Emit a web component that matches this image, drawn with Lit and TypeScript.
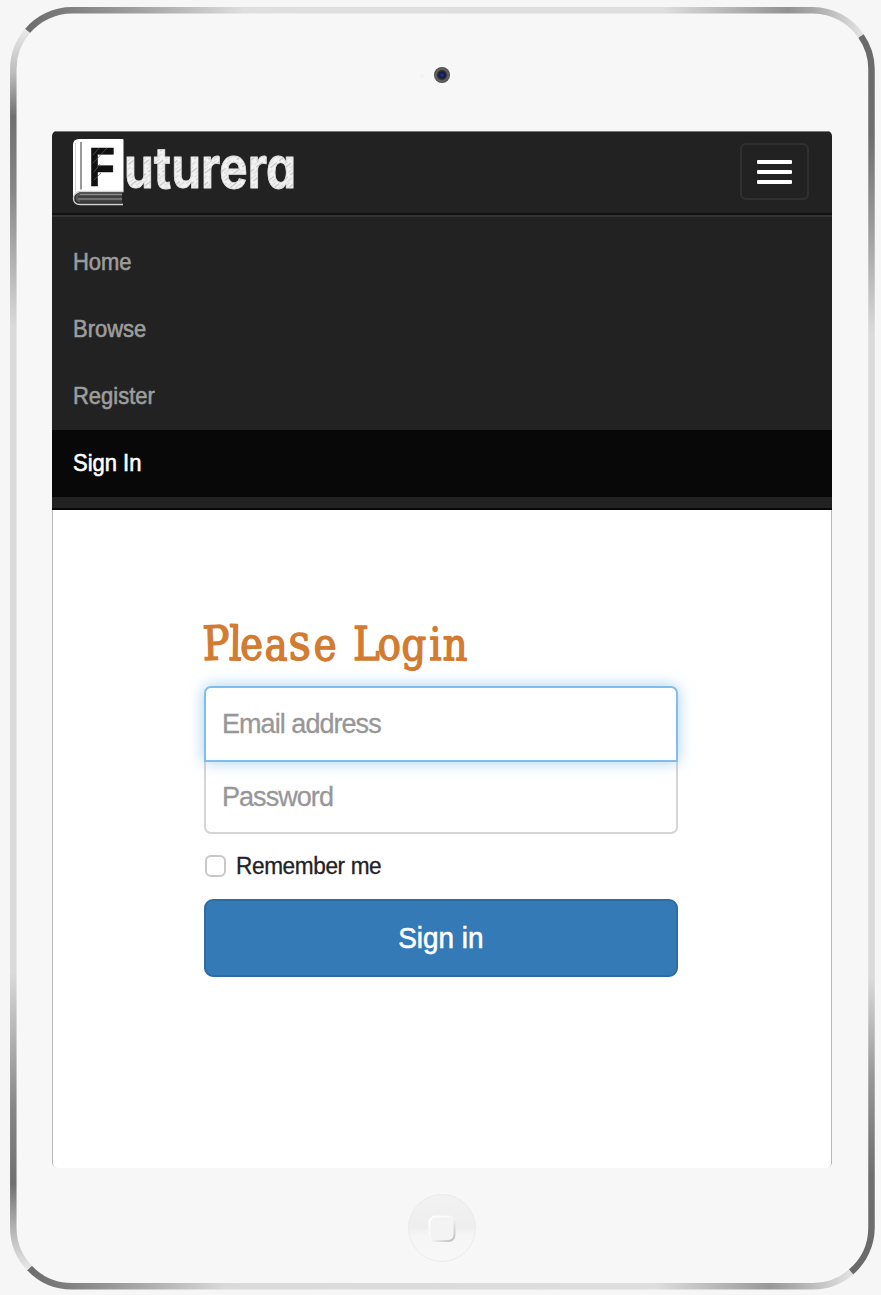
import { LitElement, html, svg, css } from "lit";
import { customElement, state } from "lit/decorators.js";

@customElement("tablet-frame")
class TabletFrame extends LitElement {
  static styles = css`
    :host { display: grid; width: 881px; height: 1295px; background: #f6f6f6; }
    .bezel, .body { grid-area: 1 / 1; }
    .bezel { display: block; }
    .body {
      display: grid;
      grid-template-rows: 131px 1037px 1fr;
      justify-items: center;
      padding-left: 2px;
      box-sizing: border-box;
    }
    .camera { align-self: start; margin: 66px 13px 0 0; display: block; }
    .home { margin: 25px 0 0 0; display: block; }
    .screen { width: 780px; margin-left: 1px; overflow: hidden; border-radius: 5px; }
  `;

  render() {
    const stop = (o: number, c: string) => svg`<stop offset=${o / 100} stop-color=${c}></stop>`;
    return html`
      <svg class="bezel" width="881" height="1295" viewBox="0 0 881 1295">
        <defs>
          <linearGradient id="top" gradientUnits="userSpaceOnUse" x1="28" x2="863" y1="0" y2="0">
            ${stop(0, "#6e6e6e")}${stop(4, "#7b7b7b")}${stop(13, "#a0a0a0")}${stop(26, "#dfdfdf")}${stop(76, "#dedede")}${stop(91, "#929292")}${stop(94, "#a8a8a8")}${stop(100, "#e4e4e4")}
          </linearGradient>
          <linearGradient id="bottom" gradientUnits="userSpaceOnUse" x1="28" x2="853" y1="0" y2="0">
            ${stop(0, "#6c6c6c")}${stop(5, "#808080")}${stop(24, "#dadada")}${stop(76, "#dedede")}${stop(90, "#989898")}${stop(95, "#bcbcbc")}${stop(100, "#e4e4e4")}
          </linearGradient>
          <linearGradient id="left" gradientUnits="userSpaceOnUse" x1="0" x2="0" y1="30" y2="1270">
            ${stop(0, "#e8e8e8")}${stop(3.5, "#bcbcbc")}${stop(7, "#707070")}${stop(13, "#868686")}${stop(24, "#dadada")}${stop(76, "#dadada")}${stop(87, "#868686")}${stop(93, "#707070")}${stop(96.5, "#b0b0b0")}${stop(100, "#e8e8e8")}
          </linearGradient>
          <linearGradient id="right" gradientUnits="userSpaceOnUse" x1="0" x2="0" y1="35" y2="1275">
            ${stop(0, "#6a6a6a")}${stop(8, "#6e6e6e")}${stop(15, "#989898")}${stop(24, "#dadada")}${stop(76, "#dadada")}${stop(84, "#989898")}${stop(92, "#6e6e6e")}${stop(100, "#6a6a6a")}
          </linearGradient>
        </defs>
        <rect x="12" y="9" width="861" height="1279" rx="60" fill="#f7f7f7"></rect>
        <g fill="none" stroke-width="6.5">
          <path d="M27.500 31 A58.500 58.500 0 0 1 72 10.300 H813 A58.500 58.500 0 0 1 861 36" stroke="url(#top)"></path>
          <path d="M861 36 A58.500 58.500 0 0 1 871.500 69 V1228 A58.500 58.500 0 0 1 851 1272" stroke="url(#right)"></path>
          <path d="M851 1272 A58.500 58.500 0 0 1 813 1286.300 H72 A58.500 58.500 0 0 1 29.500 1268" stroke="url(#bottom)"></path>
          <path d="M29.500 1268 A58.500 58.500 0 0 1 13.300 1228 V69 A58.500 58.500 0 0 1 27.500 31" stroke="url(#left)"></path>
        </g>
      </svg>
      <div class="body">
        <svg class="camera" width="30" height="18" viewBox="0 0 30 18">
          <defs><radialGradient id="lens"><stop offset="0" stop-color="#1b3aa0"></stop><stop offset=".35" stop-color="#121a48"></stop><stop offset=".55" stop-color="#333"></stop><stop offset=".75" stop-color="#666"></stop><stop offset="1" stop-color="#484848"></stop></radialGradient></defs>
          <circle cx="2" cy="10" r="2" fill="#f1f1f1"></circle>
          <circle cx="22" cy="9" r="8" fill="url(#lens)"></circle>
        </svg>
        <div class="screen"><slot></slot></div>
        <svg class="home" width="70" height="70" viewBox="0 0 70 70">
          <defs>
            <linearGradient id="disc" x1="0" x2="0" y1="0" y2="1"><stop offset="0" stop-color="#f2f2f2"></stop><stop offset=".49" stop-color="#eeeeee"></stop><stop offset=".62" stop-color="#f6f6f6"></stop><stop offset="1" stop-color="#f7f7f7"></stop></linearGradient>
            <linearGradient id="glyph" x1="0" x2="1" y1="0" y2="1"><stop offset="0" stop-color="#fff"></stop><stop offset=".5" stop-color="#f6f6f6"></stop><stop offset="1" stop-color="#bcbcbc"></stop></linearGradient>
          </defs>
          <circle cx="35" cy="35" r="33.500" fill="url(#disc)" stroke="#ebebeb"></circle>
          <rect x="22.500" y="23.500" width="25" height="24.500" rx="6" fill="#f3f3f3" stroke="url(#glyph)" stroke-width="2"></rect>
        </svg>
      </div>
    `;
  }
}

@customElement("site-nav")
class SiteNav extends LitElement {
  static styles = css`
    :host { display: block; background: #222; font-family: "Liberation Sans", Arial, sans-serif; border-top: 1px solid #777; box-sizing: border-box; height: 379px; border-bottom: 2px solid #080808; }
    .header { display: flex; justify-content: space-between; align-items: flex-start; height: 85px; box-sizing: border-box; padding: 5px 23px 0 19px; border-bottom: 2px solid #333; box-shadow: inset 0 -2px #121212; }
    .brand { display: block; overflow: visible; }
    .toggle { display: flex; flex-direction: column; justify-content: center; align-items: center; gap: 6px; width: 69px; height: 57px; margin-top: 6px; padding: 0; background: transparent; border: 2px solid #303030; border-radius: 6px; box-sizing: border-box; }
    .bar { width: 35px; height: 4px; border-radius: 1px; background: #fff; }
    .menu { list-style: none; margin: 0; padding: 12px 0 11px; }
    .link { display: flex; align-items: center; height: 67px; padding-left: 21px; color: #9d9d9d; text-decoration: none; font-size: 24px; -webkit-text-stroke: 0.6px currentColor; }
    .active { background: #080808; color: #fff; }
    .label { display: inline-block; transform: scaleX(0.915); transform-origin: left; white-space: nowrap; margin-top: -1px; }
    .book { font: 700 55px "Liberation Sans", Arial, sans-serif; fill: #111; stroke: #111; stroke-width: 0.6; }
    .name { font: 700 57px Inter, sans-serif; font-feature-settings: "cv11"; fill: url(#chalk); stroke: #e2e2e2; stroke-width: 0.8; stroke-linejoin: round; }
  `;

  render() {
    const items = ["Home", "Browse", "Register", "Sign In"];
    return html`
      <div class="header">
        <svg class="brand" width="226" height="72" viewBox="71 137 226 72">
          <defs>
            <pattern id="chalk" width="11" height="9" patternUnits="userSpaceOnUse" patternTransform="rotate(-38)">
              <rect width="11" height="9" fill="#f2f2f2"></rect>
              <rect y="1" width="8" height="1.200" fill="#c2c2c2"></rect>
              <rect x="4" y="4.500" width="7" height="0.900" fill="#cecece"></rect>
              <rect y="7" width="6" height="0.900" fill="#d8d8d8"></rect>
            </pattern>
          </defs>
          <path d="M79 139 H122.500 Q123.500 139 123.500 140 V191.500 H78 L73 197 V145 Q73 139 79 139Z" fill="#fff"></path>
          <path d="M75.500 143 V192" stroke="#d0d0d0" stroke-width="1"></path>
          <path d="M81 142 V189.500" stroke="#999" stroke-width="2"></path>
          <path d="M123.500 191.500 H80 Q73.500 193 73.500 198 Q73.500 204.500 80 204.500 H123" fill="#252525" stroke="#d4d4d4" stroke-width="1.400"></path>
          <path d="M122 192 H80 Q75.500 194 75.500 198 Q76 202 80 202.500 H122Z" fill="#555"></path>
          <path d="M80 194.500 H122 M78 199 H122" stroke="#888" stroke-width="1"></path>
          <path d="M78 196.800 H122 M80 201.200 H122" stroke="#333" stroke-width="1.200"></path>
          <text class="book" x="88.500" y="185.500" textLength="26.500" lengthAdjust="spacingAndGlyphs">F</text>
          <path d="M93 155 L99 148 M93 163 L107 148 M94 172 L100 164 M94 180 L101 173" stroke="#606060" stroke-width=".7"></path>
          <text class="name" x="124" y="188" textLength="172" lengthAdjust="spacingAndGlyphs">uturera</text>
        </svg>
        <button class="toggle" aria-label="Toggle navigation"><span class="bar"></span><span class="bar"></span><span class="bar"></span></button>
      </div>
      <ul class="menu">
        ${items.map((t) => html`<li><a class="link ${t === "Sign In" ? "active" : ""}" href="#"><span class="label">${t}</span></a></li>`)}
      </ul>
    `;
  }
}

@customElement("login-form")
class LoginForm extends LitElement {
  @state() remember = false;

  static styles = css`
    :host { display: block; background: #fff; font-family: "Liberation Sans", Arial, sans-serif; height: 658px; box-sizing: border-box; border: solid #b8b8b8; border-width: 0 1px; border-radius: 0 0 5px 5px; padding: 103px 0 0 151px; }
    .form { display: flex; flex-direction: column; width: 474px; margin: 0; }
    .title { margin: 0; height: 73px; }
    .lettering { display: block; overflow: visible; }
    .script { font: 45px "DejaVu Serif", serif; fill: #d27b31; stroke: #d27b31; stroke-width: 1.5; stroke-linejoin: round; }
    .cap { font-size: 47px; }
    .big { font-size: 50px; }
    .field { width: 474px; box-sizing: border-box; border: 2px solid #d5d5d5; background: #fff; font: 27px "Liberation Sans", Arial, sans-serif; letter-spacing: -0.95px; padding: 0 16px; outline: none; }
    .field::placeholder { color: #979797; opacity: 1; -webkit-text-stroke: 0.3px currentColor; }
    .email { height: 76px; border-color: #80bcec; border-radius: 7px 7px 0 0; box-shadow: 0 0 15px rgba(102, 175, 233, 0.6); z-index: 1; position: relative; }
    .password { height: 74px; margin-top: -2px; border-radius: 0 0 7px 7px; }
    .remember { display: flex; align-items: center; gap: 10px; height: 65px; font-size: 24px; color: #222; padding-left: 1px; }
    .box { appearance: none; width: 21px; height: 22px; margin: -2px 0 0; border: 2px solid #c8c8c8; border-radius: 6px; background: #fff; }
    .caption { display: inline-block; transform: scaleX(0.962); transform-origin: left; white-space: nowrap; font-size: 23.5px; letter-spacing: -0.4px; -webkit-text-stroke: 0.3px currentColor; }
    .submit { height: 78px; border: 2px solid #2e6da4; border-radius: 9px; background: #337ab7; color: #fff; font: 30px "Liberation Sans", Arial, sans-serif; padding: 0; }
    .action { display: inline-block; transform: scaleX(0.93); -webkit-text-stroke: 0.6px currentColor; }
  `;

  render() {
    return html`
      <form class="form">
        <h2 class="title">
          <svg class="lettering" width="474" height="60" viewBox="204 613 474 60">
            <text class="script" transform="translate(203 660) scale(.86 1)" x="0 30 43.500 71.500 100 128.500 160 174.500 203.500 230.500 263 278.500" rotate="-2 1 -2 1 -2 1 0 0 -2 1 0 1"><tspan class="cap">Pl</tspan>ea<tspan class="big">s</tspan>e <tspan class="cap">L</tspan>ogin</text>
          </svg>
        </h2>
        <input class="field email" type="email" placeholder="Email address">
        <input class="field password" type="password" placeholder="Password">
        <label class="remember">
          <input class="box" type="checkbox" .checked=${this.remember} @change=${() => (this.remember = !this.remember)}>
          <span class="caption">Remember me</span>
        </label>
        <button class="submit" type="button"><span class="action">Sign in</span></button>
      </form>
    `;
  }
}

@customElement("app-root")
class AppRoot extends LitElement {
  static styles = css`:host { display: block; width: 881px; height: 1295px; overflow: hidden; }`;

  render() {
    return html`<tablet-frame><site-nav></site-nav><login-form></login-form></tablet-frame>`;
  }
}
